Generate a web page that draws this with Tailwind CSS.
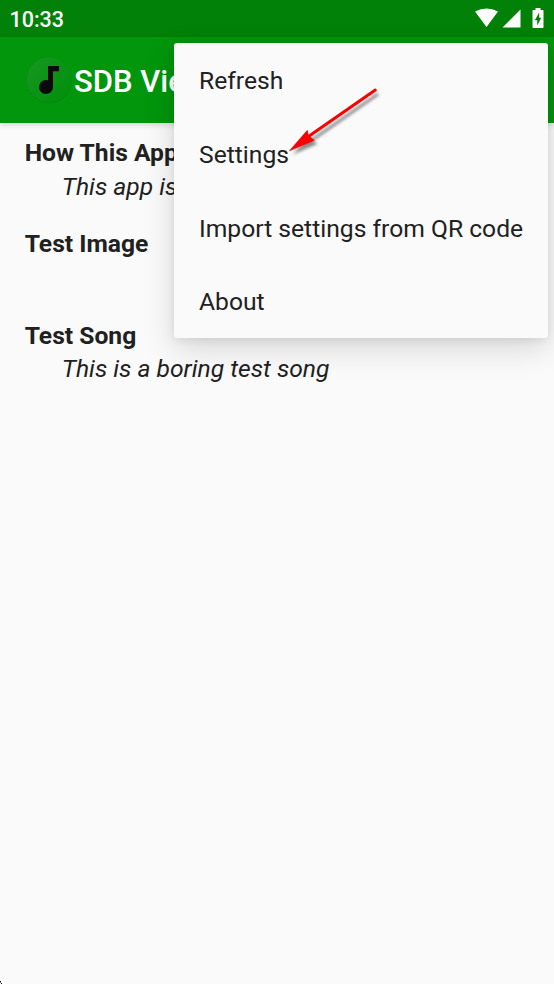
<!DOCTYPE html>
<html lang="en"><head><meta charset="utf-8"><title>SDB Viewer</title>
<script src="https://cdn.jsdelivr.net/npm/@tailwindcss/browser@4"></script></head>
<body class="bg-[#fafafa]">
<div class="relative w-[554px] h-[984px] overflow-hidden bg-[#fafafa] text-[#212121] font-['Roboto',sans-serif]">
<header class="bg-[#018107] h-[37px] flex items-center justify-between pl-[9.5px] pr-[10px] text-white">
<span class="text-[21.5px] leading-[37px] pt-[2px] font-medium">10:33</span>
<svg width="69" height="20" viewBox="0 0 69 20" class="mt-[-1px]"><path fill="white" d="M0 3.500Q11.500-2.300 23 3.500L11.500 19Z"/><path fill="white" d="M45.500 1.500V19.500H27.500Z"/><path fill="white" d="M60.500 0h5v2h2.300q.7 0 .7.7V19.300q0 .7-.7.7H58.200q-.7 0-.7-.7V2.700q0-.7.7-.7H60.500z"/><path fill="#018107" d="M64.200 4.500v5.200h2.100l-4.100 7.800v-5.300h-2.400z"/></svg>
</header>
<div class="h-[86px] bg-[#01960c] flex items-center pl-[25px] shadow-[0_2px_6px_rgba(0,0,0,0.15)]">
<svg width="48" height="48" viewBox="0 0 48 48"><defs><linearGradient id="disc" x1="0" y1="0" x2="1" y2="1"><stop stop-color="#189820"/><stop offset="1" stop-color="#008e0b"/></linearGradient></defs><circle cx="24" cy="24.600" r="22.600" fill="#007a08" opacity=".5"/><circle cx="24" cy="24" r="22.400" fill="url(#disc)"/><path d="M23.500 10h11v5.200h-6v15.800a7 7 0 1 1-5-6.700z" fill="#0b0b0b" transform="translate(-.5 0)"/></svg>
<h1 class="text-[31px] font-medium text-white ml-[1px] pt-[4px]">SDB Vie</h1></div>
<main class="pl-[24.700px] pt-[13px] text-[24.650px] leading-[33px]">
<section class="h-[91px]"><h2 class="font-bold">How This App</h2><p class="italic pl-[37px] pt-[1px]">This app is</p></section>
<section class="h-[91px]"><h2 class="font-bold">Test Image</h2></section>
<section class="pt-[0.5px]"><h2 class="font-bold">Test Song</h2><p class="italic pl-[37px] pt-[0.5px]">This is a boring test song</p></section>
</main>
<nav class="absolute left-[174px] top-[43px] w-[374px] h-[295px] bg-[#fafafa] rounded-[3px] shadow-[0_10px_32px_rgba(0,0,0,0.15),0_2px_9px_rgba(0,0,0,0.08)] pl-[25px] pt-[1px] text-[24.650px] leading-[73.800px]">
<div>Refresh</div><div>Settings</div><div>Import settings from QR code</div><div>About</div></nav>
<svg class="absolute left-[280px] top-[80px]" width="110" height="85" viewBox="0 0 110 85"><defs><filter id="soft" x="-20%" y="-20%" width="140%" height="140%"><feGaussianBlur stdDeviation="1.600"/></filter></defs>
<g transform="translate(3 4)" opacity=".55" filter="url(#soft)"><path d="M95 10L29 56" stroke="#333" stroke-width="3"/><path d="M10 70.500L27 50.500L29 56L34.500 60Z" fill="#333"/></g>
<path d="M95.300 10L27 57.500" stroke="#fc0000" stroke-width="3" stroke-linecap="round"/><path d="M9.500 70.800L27.300 50.300L28.500 56L34.300 60.300Z" fill="#fc0000" stroke="#e00" stroke-width=".6"/></svg>
<svg class="absolute left-0 bottom-0" width="2" height="3" viewBox="0 0 2 3"><path d="M0 0h1v1H0zM1 2h1v1H1z" fill="#111"/><path d="M0 1h1v1H0z" fill="#777"/></svg>
</div></body></html>
